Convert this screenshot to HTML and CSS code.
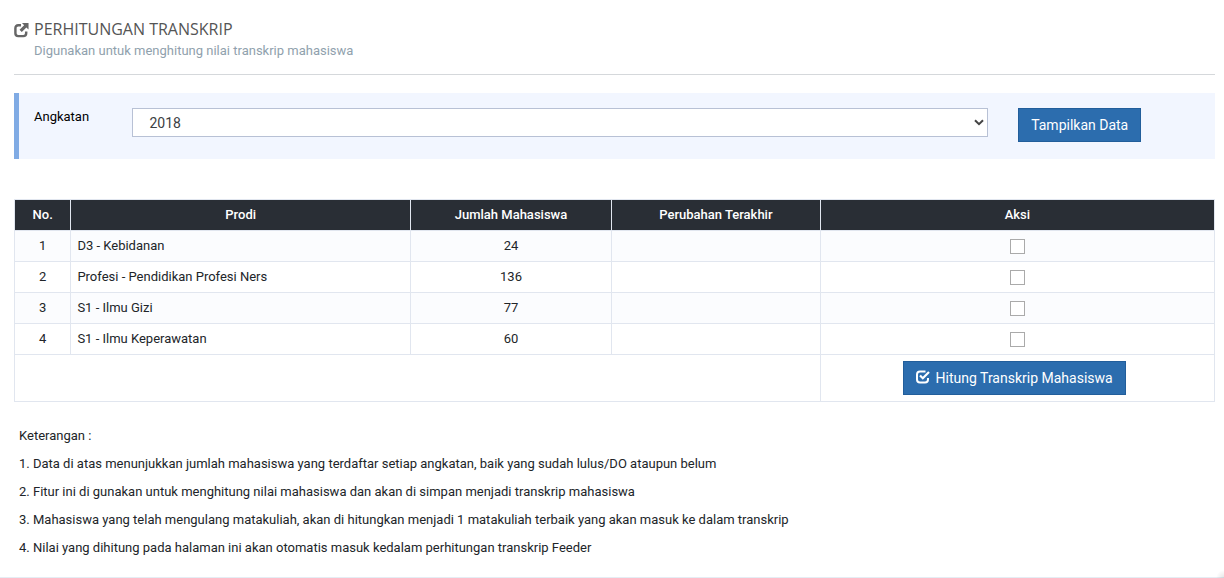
FILE: index.html
```html
<!DOCTYPE html>
<html lang="id">
<head>
<meta charset="utf-8">
<meta name="viewport" content="width=device-width, initial-scale=1">
<title>Perhitungan Transkrip</title>
<link rel="stylesheet" href="styles.css">
</head>
<body>
<main class="page">
  <header class="page-header">
    <svg class="title-icon" viewBox="0 0 16 16" aria-hidden="true">
      <path d="M7.500 3H4.500Q1.500 3 1.500 6v5.500q0 3 3 3h5.500q3 0 3-3V9.500" fill="none" stroke="currentColor" stroke-width="2.600"/>
      <path d="M8.500 0.500H15.500V7.500L13.200 5.200L8.300 10.100L5.900 7.700L10.800 2.800Z" fill="currentColor"/>
    </svg>
    <div>
      <h1 class="title">PERHITUNGAN TRANSKRIP</h1>
      <p class="subtitle">Digunakan untuk menghitung nilai transkrip mahasiswa</p>
    </div>
  </header>

  <form class="filter">
    <div class="filter-cell"><label class="filter-label" for="angkatan">Angkatan</label></div>
    <div class="filter-cell">
      <div class="select-wrap">
        <select class="select" id="angkatan"><option>2018</option></select>
        <svg class="chevron" viewBox="0 0 10 7" aria-hidden="true"><path d="M1 1.200L5 5.200L9 1.200" fill="none" stroke="currentColor" stroke-width="2"/></svg>
      </div>
    </div>
    <div class="filter-cell"><button class="button" type="button">Tampilkan Data</button></div>
  </form>

  <table class="table">
    <colgroup><col class="col-no"><col class="col-prodi"><col class="col-jumlah"><col class="col-perubahan"><col></colgroup>
    <thead>
      <tr><th>No.</th><th>Prodi</th><th>Jumlah Mahasiswa</th><th>Perubahan Terakhir</th><th>Aksi</th></tr>
    </thead>
    <tbody>
      <tr><td>1</td><td class="prodi">D3 - Kebidanan</td><td>24</td><td></td><td><input class="check" type="checkbox" aria-label="D3 - Kebidanan"></td></tr>
      <tr><td>2</td><td class="prodi">Profesi - Pendidikan Profesi Ners</td><td>136</td><td></td><td><input class="check" type="checkbox" aria-label="Profesi - Pendidikan Profesi Ners"></td></tr>
      <tr><td>3</td><td class="prodi">S1 - Ilmu Gizi</td><td>77</td><td></td><td><input class="check" type="checkbox" aria-label="S1 - Ilmu Gizi"></td></tr>
      <tr><td>4</td><td class="prodi">S1 - Ilmu Keperawatan</td><td>60</td><td></td><td><input class="check" type="checkbox" aria-label="S1 - Ilmu Keperawatan"></td></tr>
    </tbody>
    <tfoot>
      <tr>
        <td colspan="4"></td>
        <td class="action">
          <button class="button" type="button">
            <svg class="button-icon" viewBox="0 0 14 14" aria-hidden="true">
              <path d="M9.500 1.500H4Q1 1.500 1 4.500v5q0 3 3 3h5q3 0 3-3V8" fill="none" stroke="currentColor" stroke-width="2"/>
              <path d="M4 5.500L6.800 8.200L13 2" fill="none" stroke="currentColor" stroke-width="2.200"/>
            </svg>
            Hitung Transkrip Mahasiswa
          </button>
        </td>
      </tr>
    </tfoot>
  </table>

  <section class="notes">
    <p>Keterangan :</p>
    <p>1. Data di atas menunjukkan jumlah mahasiswa yang terdaftar setiap angkatan, baik yang sudah lulus/DO ataupun belum</p>
    <p>2. Fitur ini di gunakan untuk menghitung nilai mahasiswa dan akan di simpan menjadi transkrip mahasiswa</p>
    <p>3. Mahasiswa yang telah mengulang matakuliah, akan di hitungkan menjadi 1 matakuliah terbaik yang akan masuk ke dalam transkrip</p>
    <p>4. Nilai yang dihitung pada halaman ini akan otomatis masuk kedalam perhitungan transkrip Feeder</p>
  </section>
</main>
<div class="corner-shadow" aria-hidden="true"></div>
</body>
</html>
```

FILE: styles.css
```css
* { box-sizing: border-box; }

body {
  margin: 0;
  background: #fff;
  color: #212529;
  font: 13px/18px Roboto, "Noto Sans", sans-serif;
}

h1, p { margin: 0; }

.page {
  padding: 18px 9px 20px 14px;
  border-bottom: 1px solid #e5edf4;
}

.page-header {
  display: flex;
  gap: 5px;
  padding-bottom: 14px;
  border-bottom: 1px solid #d5d8db;
}

.title-icon {
  flex: none;
  width: 15px;
  height: 16px;
  margin-top: 4px;
  color: #666;
}

.title {
  color: #555;
  font-family: "Open Sans", "Noto Sans", sans-serif;
  font-size: 16px;
  font-weight: 400;
  line-height: 22px;
}

.subtitle {
  padding-top: 2px;
  color: #90a1ad;
}

.filter {
  display: grid;
  grid-template-columns: 1fr 9fr 2fr;
  margin-top: 18px;
  padding: 15px 15px 17px 0;
  border-left: 5px solid #80abe4;
  background: #f2f6ff;
}

.filter-cell {
  min-width: 0;
  padding: 0 15px;
}

.filter-label {
  color: #000;
}

.select-wrap { position: relative; }

.select {
  display: block;
  width: 100%;
  height: 29px;
  padding: 0 16px;
  appearance: none;
  border: 1px solid #b8c1d5;
  border-radius: 0;
  background: #fff;
  color: #3c4043;
  font: inherit;
  font-size: 14px;
}

.chevron {
  position: absolute;
  top: 11px;
  right: 4px;
  width: 10px;
  height: 7px;
  color: #444;
  pointer-events: none;
}

.button {
  height: 34px;
  padding: 0 12px;
  border: 1px solid #225e9b;
  background: #2c6dae;
  color: #fff;
  font: inherit;
  font-size: 14px;
  white-space: nowrap;
}

.button-icon {
  width: 14px;
  height: 14px;
  margin-right: 2px;
  vertical-align: -1px;
}

.table {
  width: 100%;
  margin-top: 40px;
  border-collapse: collapse;
  table-layout: fixed;
}

.col-no { width: 4.7%; }
.col-prodi { width: 28.3%; }
.col-jumlah { width: 16.75%; }
.col-perubahan { width: 17.4%; }

.table th,
.table td {
  padding: 6px;
  border: 1px solid #e1e6ef;
  text-align: center;
}

.table th {
  background: #292e35;
  color: #fff;
  font-weight: 500;
}

.table tbody tr:nth-child(odd) { background: #fbfcfe; }
.table .prodi { text-align: left; }
.table .action { padding-right: 12px; }

.check {
  display: block;
  width: 15px;
  height: 15px;
  margin: 0 auto;
  appearance: none;
  border: 1px solid #aaa;
  background: #fff;
}

.check:checked { background: #2c6dae; }

.notes {
  display: grid;
  gap: 10px;
  margin-top: 25px;
  padding-left: 5px;
}

.corner-shadow {
  position: fixed;
  right: 0;
  bottom: 0;
  width: 8px;
  height: 8px;
  background: radial-gradient(circle at bottom right, #0000001a, transparent 70%);
}
```
